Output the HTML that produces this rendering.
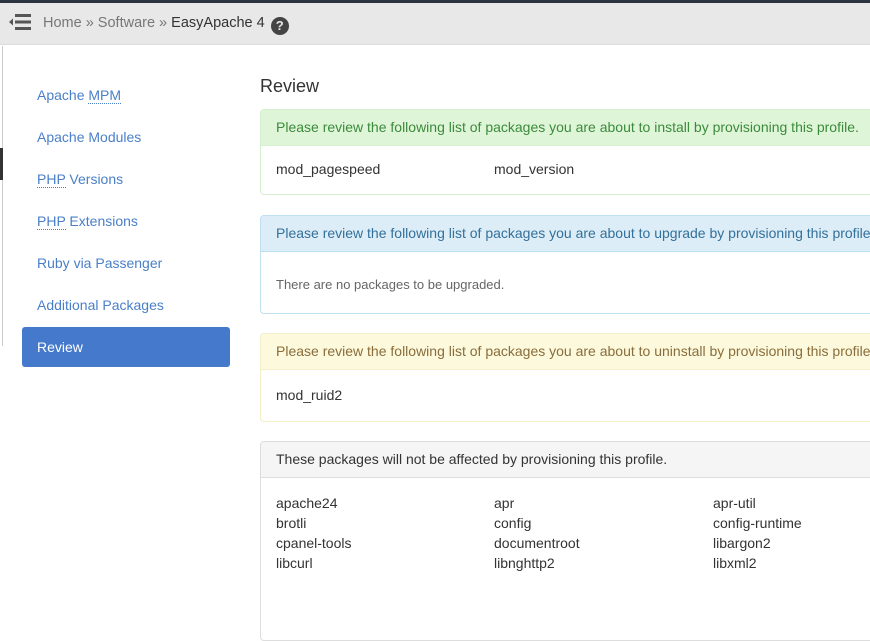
<!DOCTYPE html>
<html><head><meta charset="utf-8"><style>
*{box-sizing:border-box;margin:0;padding:0}
body{width:870px;height:565px;overflow:hidden;background:#fff;font-family:"Liberation Sans",sans-serif;font-size:14px;color:#333;position:relative}
.top{position:absolute;left:0;top:0;width:870px;height:3px;background:#2b3440}
.hdr{position:absolute;left:0;top:3px;width:870px;height:42px;background:#e8e8e8;border-bottom:1px solid #ddd}
.crumb{position:absolute;left:43px;top:12px;font-size:14.5px;color:#777}
.crumb b{font-weight:normal;color:#333}
.q{display:inline-block;width:18px;height:18px;border-radius:50%;background:#444;color:#e8e8e8;font-weight:bold;font-size:13px;text-align:center;line-height:18px;margin-left:6px;vertical-align:-3px}
.lline{position:absolute;left:2px;top:46px;width:1px;height:300px;background:#ccc}
.lline2{position:absolute;left:0;top:148px;width:3px;height:32px;background:#333}
.nav a{position:absolute;left:37px;color:#4a7fc8;text-decoration:none;font-size:14px}
.nav u{text-decoration:none;border-bottom:1px dotted #4a7fc8}
.act{position:absolute;left:22px;top:327px;width:208px;height:40px;background:#4479cc;border-radius:3px;color:#fff;padding:12px 15px;font-size:14px}
h2{position:absolute;left:260px;top:76px;font-size:18px;font-weight:normal;color:#333}
.p{position:absolute;left:260px;width:620px;border:1px solid;border-radius:4px;overflow:hidden}
.p .h{height:36px;padding:9px 15px;border-bottom:1px solid;white-space:nowrap}
.p .b{padding:0 15px;position:relative}
.c{position:absolute;white-space:nowrap}
</style></head><body>
<div class="top"></div>
<div class="hdr">
<svg style="position:absolute;left:8px;top:9px" width="24" height="20" viewBox="0 0 24 20"><rect x="7" y="2" width="16" height="3" fill="#555"/><rect x="7" y="8.5" width="16" height="3" fill="#555"/><rect x="7" y="15" width="16" height="3" fill="#555"/><path d="M1 10L5 6.5V13.5Z" fill="#555"/></svg>
<div class="crumb">Home » Software » <b>EasyApache 4</b><span class="q">?</span></div>
</div>
<div class="lline"></div><div class="lline2"></div>
<div class="nav">
<a style="top:87px">Apache <u>MPM</u></a>
<a style="top:129px">Apache Modules</a>
<a style="top:171px"><u>PHP</u> Versions</a>
<a style="top:213px"><u>PHP</u> Extensions</a>
<a style="top:255px">Ruby via Passenger</a>
<a style="top:297px">Additional Packages</a>
</div>
<div class="act">Review</div>
<h2>Review</h2>
<div class="p" style="top:109px;height:86px;border-color:#d6efcf">
<div class="h" style="background:#dff5d8;color:#3c8a3c;border-color:#d6efcf">Please review the following list of packages you are about to install by provisioning this profile.</div>
<div class="b"><span class="c" style="left:15px;top:15px">mod_pagespeed</span><span class="c" style="left:233px;top:15px">mod_version</span></div>
</div>
<div class="p" style="top:215px;height:99px;border-color:#bfe0ef">
<div class="h" style="background:#dcedf7;color:#33709a;border-color:#bfe0ef">Please review the following list of packages you are about to upgrade by provisioning this profile.</div>
<div class="b"><span class="c" style="left:15px;top:25px;font-size:13px;color:#666">There are no packages to be upgraded.</span></div>
</div>
<div class="p" style="top:333px;height:89px;border-color:#f3efc8">
<div class="h" style="background:#fcf9dc;color:#8a6d3b;border-color:#f3efc8">Please review the following list of packages you are about to uninstall by provisioning this profile.</div>
<div class="b"><span class="c" style="left:15px;top:17px">mod_ruid2</span></div>
</div>
<div class="p" style="top:441px;height:200px;border-color:#ddd">
<div class="h" style="background:#f5f5f5;color:#333;border-color:#ddd">These packages will not be affected by provisioning this profile.</div>
<div class="b">
<span class="c" style="left:15px;top:17px">apache24</span><span class="c" style="left:233px;top:17px">apr</span><span class="c" style="left:452px;top:17px">apr-util</span>
<span class="c" style="left:15px;top:37px">brotli</span><span class="c" style="left:233px;top:37px">config</span><span class="c" style="left:452px;top:37px">config-runtime</span>
<span class="c" style="left:15px;top:57px">cpanel-tools</span><span class="c" style="left:233px;top:57px">documentroot</span><span class="c" style="left:452px;top:57px">libargon2</span>
<span class="c" style="left:15px;top:77px">libcurl</span><span class="c" style="left:233px;top:77px">libnghttp2</span><span class="c" style="left:452px;top:77px">libxml2</span>
</div>
</div>
</body></html>
